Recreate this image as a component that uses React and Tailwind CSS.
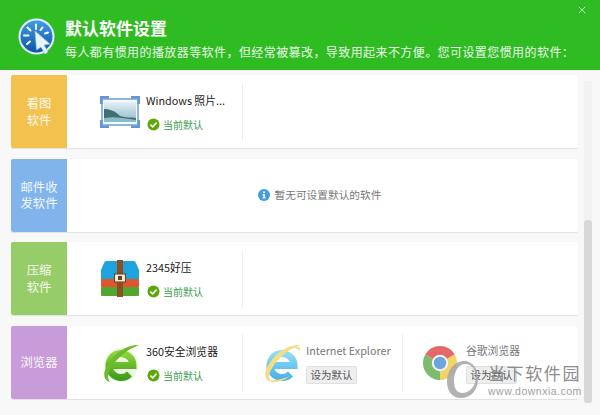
import { X } from 'lucide-react'

const CJK = 'font-["Noto_Sans_CJK_SC","Liberation_Sans",sans-serif]'

function CheckBadge() {
  return (
    <svg width="13" height="13" viewBox="0 0 13 13" className="shrink-0">
      <circle cx="6.5" cy="6.5" r="6" fill="#5aa80a" />
      <path d="M3.4 6.6 5.6 8.8 9.6 4.6" fill="none" stroke="#fff" strokeWidth="1.6" />
    </svg>
  )
}

function LogoIcon() {
  return (
    <svg width="38" height="38" viewBox="0 0 38 38">
      <defs>
        <linearGradient id="logo-blue" x1="0" y1="0" x2="0" y2="1">
          <stop offset="0" stopColor="#3f9be6" />
          <stop offset="1" stopColor="#0d55a8" />
        </linearGradient>
      </defs>
      <circle cx="18.5" cy="18.5" r="18" fill="#dff0fa" />
      <circle cx="18.5" cy="18.5" r="16" fill="url(#logo-blue)" />
      <g stroke="#fff" strokeWidth="2" strokeLinecap="round">
        <path d="M18 6.5v4.5M9.5 9.5l3 3M24.5 9.5l-2 2.5M6 17.5h4.5M27 15.5l3-1M9 26l3-2.5" />
      </g>
      <path d="M17 13 32 26 26 27 30 34 27 36 23 29 18.5 32Z" fill="#e8f3fa" stroke="#9cc4dc" strokeWidth=".6" />
    </svg>
  )
}

function PhotoIcon() {
  return (
    <svg width="40" height="32" viewBox="0 0 40 32">
      <defs>
        <linearGradient id="photo-sky" x1="0" y1="0" x2="0" y2="1">
          <stop offset="0" stopColor="#e4f0f6" />
          <stop offset="1" stopColor="#8fb8c8" />
        </linearGradient>
      </defs>
      <rect x="1" y="2" width="38" height="28" fill="#8fb4e0" />
      <rect x="3" y="4" width="34" height="24" fill="#f4f8fb" />
      <rect x="4" y="6" width="32" height="20" fill="url(#photo-sky)" />
      <path d="M4 13C10 13 15 15 20 20 26 22 31 21 36 22V26H4Z" fill="#41716f" />
      <path d="M4 22C14 20 24 22 36 24V26H4Z" fill="#86bccb" />
      <path d="M0 0h9v2.500H2.500V8H0ZM40 0H31v2.500h6.500V8H40ZM0 32h9v-2.500H2.500V24H0ZM40 32H31v-2.500h6.500V24H40Z" fill="#6595d4" />
    </svg>
  )
}

function ArchiveIcon() {
  return (
    <svg width="40" height="37" viewBox="0 0 40 37">
      <path d="M6 1H34Q35 1 36 3L39 10V19H1V10L4 3Q5 1 6 1Z" fill="#1ea3df" />
      <rect x="1" y="19" width="38" height="8" fill="#e0562e" />
      <rect x="1" y="27" width="38" height="9" rx="1" fill="#4fa72f" />
      <rect x="17" y="0" width="6" height="37" fill="#8a4f24" />
      <rect x="14.500" y="14" width="11" height="8" fill="#f2ead8" stroke="#6b3f1e" />
      <rect x="18" y="16" width="4" height="4" fill="#6b3f1e" />
    </svg>
  )
}

function EIcon({ id, from, to, ring, back, tail }) {
  return (
    <svg width="38" height="40" viewBox="0 0 38 40">
      <defs>
        <linearGradient id={id} x1="0" y1="0" x2="0" y2="1">
          <stop offset="0" stopColor={from} />
          <stop offset="1" stopColor={to} />
        </linearGradient>
      </defs>
      {back && <circle cx="19" cy="22" r="17" fill={back} />}
      <path d="M8 22.500H31A12 12 0 1 0 27.500 31" fill="none" stroke={`url(#${id})`} strokeWidth="7" />
      <path d="M37 2C26 1 10 10 3 27 1 33 3 38 8 39 5 35 6 30 9 25 16 13 27 6 37 2Z" fill={ring} />
      {tail && <path d="M8 39C14 40 22 37 27 33 22 35 14 38 8 37Z M30 4C35 2 38 4 37 9 36 6 34 5 30 4Z" fill={ring} />}
    </svg>
  )
}

function ChromeIcon() {
  return (
    <svg width="36" height="36" viewBox="0 0 36 36">
      <path d="M18 18 3.300 9.500A17 17 0 0 1 32.700 9.500Z" fill="#e4686a" />
      <path d="M18 18 32.700 9.500A17 17 0 0 1 18 35Z" fill="#f3d46a" />
      <path d="M18 18 18 35A17 17 0 0 1 3.300 9.500Z" fill="#7dbb70" />
      <circle cx="18" cy="18" r="8.200" fill="#f4f4f4" />
      <circle cx="18" cy="18" r="6.200" fill="#6ea4de" />
    </svg>
  )
}

function Current() {
  return (
    <div className="flex items-center gap-[3px] h-[16px] pl-[1px]">
      <CheckBadge />
      <span className="text-[10px] text-[#3a9c4c]">当前默认</span>
    </div>
  )
}

function SetDefault() {
  return (
    <button className="h-[18px] w-[51px] rounded-[2px] bg-[#eeeeee] border border-[#dfdfdf] text-[10.5px] leading-none text-[#555]">
      设为默认
    </button>
  )
}

function Slot({ icon, name, dim, action, className, iconBox }) {
  return (
    <div className={`flex items-center h-[58px] ${className}`}>
      <div className={`flex shrink-0 ${iconBox}`}>{icon}</div>
      <div className="flex flex-col gap-[7px]">
        <div className={`text-[10.8px] leading-[18px] whitespace-nowrap ${dim ? 'text-[#777]' : 'text-[#222]'}`}>{name}</div>
        {action}
      </div>
    </div>
  )
}

function Row({ label, color, children }) {
  return (
    <div className="flex h-[74px] rounded-[2px] bg-white border-b border-[#e2e2e2] shadow-[0_0_1px_#e4e4e4]">
      <div className={`w-[56px] shrink-0 flex items-center justify-center text-center rounded-l-[2px] text-[12.3px] leading-[16.5px] text-white/90 ${color}`}>
        {label}
      </div>
      <div className="flex-1 flex items-center">{children}</div>
    </div>
  )
}

export default function App() {
  return (
    <div className={`relative w-[600px] h-[415px] overflow-hidden flex flex-col bg-[#f8f8f8] ${CJK}`}>
      {/* Header */}
      <div className="relative h-[70px] shrink-0 bg-[#2fbb22] flex items-center pl-[18px] text-white">
        <div className="mt-[4px]"><LogoIcon /></div>
        <div className="ml-[9px] mt-[6px]">
          <div className="text-[17px] font-bold leading-[24px]">默认软件设置</div>
          <div className="text-[12px] leading-[18px] mt-[3px] tracking-[0.42px] text-white/90 whitespace-nowrap">每人都有惯用的播放器等软件，但经常被篡改，导致用起来不方便。您可设置您惯用的软件：</div>
        </div>
        <button className="absolute right-[12px] top-[4px] text-white/90"><X size={12} strokeWidth={1.6} /></button>
      </div>

      {/* Body */}
      <div className="flex-1 flex min-h-0">
        <div className="w-[567px] ml-[11px] pt-[5px] flex flex-col gap-[9.7px]">
          <Row label={<>看图<br />软件</>} color="bg-[#f2c14e]">
            <Slot className="w-[176px] border-r border-[#eeeeee] pl-[33px]" iconBox="w-[46px]" icon={<PhotoIcon />}
              name="Windows 照片..." action={<Current />} />
          </Row>
          <Row label={<>邮件收<br />发软件</>} color="bg-[#82b4ec]">
            <div className="flex-1 flex items-center justify-center gap-[5px] pr-[6px] text-[10.7px] text-[#777]">
              <svg width="12" height="12" viewBox="0 0 12 12">
                <circle cx="6" cy="6" r="6" fill="#3f9fe0" />
                <path d="M5 2.400h2v1.600H5ZM4.600 5h2.400v3.400h.7v1H4.400v-1h.8V6h-.6Z" fill="#fff" />
              </svg>
              暂无可设置默认的软件
            </div>
          </Row>
          <Row label={<>压缩<br />软件</>} color="bg-[#97cd68]">
            <Slot className="w-[176px] border-r border-[#eeeeee] pl-[33px]" iconBox="w-[46px]" icon={<ArchiveIcon />}
              name="2345好压" action={<Current />} />
          </Row>
          <Row label="浏览器" color="bg-[#c79cd8]">
            <Slot className="w-[176px] border-r border-[#eeeeee] pl-[35px]" iconBox="w-[44px]"
              icon={<EIcon id="e360" from="#8ed43a" to="#3f9f1c" ring="#6cbb2c" back="#eef7e4" />}
              name="360安全浏览器" action={<Current />} />
            <Slot className="w-[160px] border-r border-[#eeeeee] pl-[20px]" iconBox="w-[43px]"
              icon={<EIcon id="eie" from="#8fdcf6" to="#4cb4e8" ring="#f5dd84" tail />}
              name="Internet Explorer" dim action={<SetDefault />} />
            <Slot className="flex-1 pl-[19px]" iconBox="w-[44px]" icon={<ChromeIcon />}
              name="谷歌浏览器" dim action={<SetDefault />} />
          </Row>
        </div>
        {/* Scrollbar */}
        <div className="w-[8px] ml-[6px] mt-[11px] mb-[12px] bg-[#f2f2f2] flex flex-col justify-end">
          <div className="h-[183px] bg-[#d8d8d8] rounded-[3px]" />
        </div>
      </div>

      {/* Site watermark */}
      <div className="absolute left-[447px] top-[361px] flex text-[#8c8c8c] pointer-events-none">
        <svg width="32" height="37" viewBox="0 0 32 37" className="shrink-0">
          <path fillRule="evenodd" d="M17 0C26 0 31 8 31 18 31 29 24 37 14 37 5 37 0 30 0 21 0 9 8 0 17 0ZM18 3C12 3 7 10 7 20 7 27 10 32 15 32 22 32 28 26 29 17 29 9 25 3 18 3Z" fill="#a4a4a4" fillOpacity=".85" />
        </svg>
        <div className="ml-[9px] pt-[1px]">
          <div className="text-[17px] leading-[22px] tracking-[1.6px] whitespace-nowrap">当下软件园</div>
          <div className="text-[10.5px] leading-[14px] tracking-[0.5px] text-[#a0a0a0] font-['Liberation_Sans',sans-serif]">www.downxia.com</div>
        </div>
      </div>
    </div>
  )
}
